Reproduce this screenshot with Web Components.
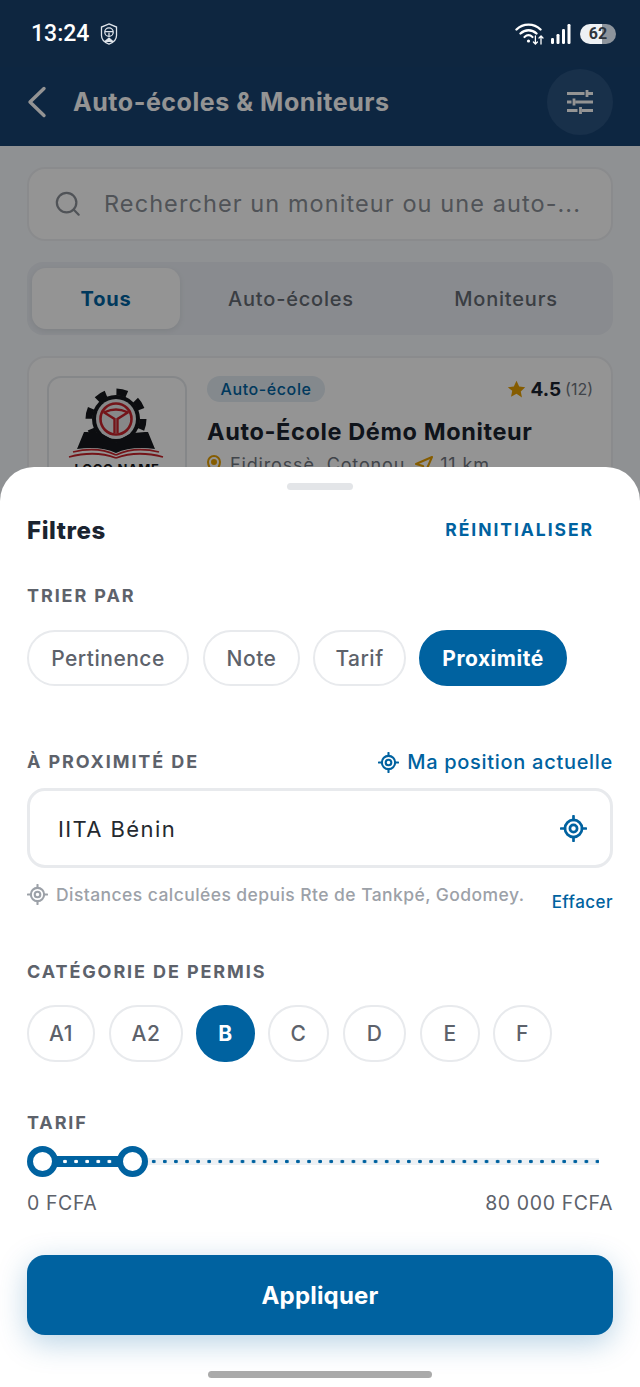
<!DOCTYPE html>
<html lang="fr">
<head>
<meta charset="utf-8">
<title>Filtres</title>
<style>
    html, body { margin: 0; padding: 0; background: #fff; }
    body { font-family: Inter, "Noto Sans", sans-serif; }
</style>
</head>
<body>
<phone-screen>
    <status-bar></status-bar>
    <top-bar title="Auto-écoles &amp; Moniteurs"></top-bar>
    <search-box placeholder="Rechercher un moniteur ou une auto-..."></search-box>
    <seg-tabs></seg-tabs>
    <school-card></school-card>
    <filter-sheet slot="sheet">
        <sheet-head></sheet-head>

        <section-label style="margin-top:40px">TRIER PAR</section-label>
        <chip-row style="margin-top:23px; gap:13px">
            <filter-chip w="162" style="margin-right:1px">Pertinence</filter-chip>
            <filter-chip w="97">Note</filter-chip>
            <filter-chip w="93">Tarif</filter-chip>
            <filter-chip w="148" active>Proximité</filter-chip>
        </chip-row>

        <near-head style="margin-top:63px"></near-head>
        <place-input style="margin-top:15px" value="IITA Bénin"></place-input>
        <place-hint style="margin-top:16px"></place-hint>

        <section-label style="margin-top:45px">CATÉGORIE DE PERMIS</section-label>
        <chip-row style="margin-top:22px; gap:13px">
            <filter-chip w="68" h="57" style="margin-right:1px">A1</filter-chip>
            <filter-chip w="74" h="57">A2</filter-chip>
            <filter-chip w="59" h="57" active>B</filter-chip>
            <filter-chip w="61" h="57" style="margin-right:1px">C</filter-chip>
            <filter-chip w="63" h="57" style="margin-right:1px">D</filter-chip>
            <filter-chip w="60" h="57">E</filter-chip>
            <filter-chip w="59" h="57">F</filter-chip>
        </chip-row>

        <section-label style="margin-top:50px">TARIF</section-label>
        <price-slider style="margin-top:12px" from="0 FCFA" to="80 000 FCFA"></price-slider>

        <primary-button style="margin-top:40px">Appliquer</primary-button>
        <home-bar></home-bar>
    </filter-sheet>
</phone-screen>

<script>
const BLUE = '#0062a0'

// same crosshair is used three times in the sheet, only size and colour change
function targetIcon(size, color) {
    return `<svg width="${size}" height="${size}" viewBox="0 0 24 24" fill="none" stroke="${color}" stroke-width="2.4" stroke-linecap="round" style="display:block;flex:none">
        <circle cx="12" cy="12" r="7.6"/>
        <circle cx="12" cy="12" r="3.2"/>
        <path d="M12 1v3.4M12 19.6V23M1 12h3.4M19.6 12H23"/>
    </svg>`
}

class PhoneScreen extends HTMLElement {
    constructor() {
        super()
        this.attachShadow({ mode: 'open' }).innerHTML = `
            <style>
                :host{
                    display:flex;
                    flex-direction:column;
                    position:relative;
                    width:640px;
                    height:1387px;
                    overflow:hidden;
                    background:#f7fafd;
                }
                .scrim{
                    position:absolute;
                    inset:0;
                    background:rgba(0,0,0,.42);
                    z-index:1;
                }
            </style>
            <slot></slot>
            <div class="scrim"></div>
            <slot name="sheet"></slot>
        `
    }
}

class StatusBar extends HTMLElement {
    constructor() {
        super()
        this.attachShadow({ mode: 'open' }).innerHTML = `
            <style>
                :host{
                    display:flex;
                    align-items:center;
                    position:relative;
                    z-index:2;
                    height:67px;
                    box-sizing:border-box;
                    padding:0 24px 0 31px;
                    background:#0e2640;
                    color:#fff;
                    font-family:Roboto,sans-serif;
                }
                .time{
                    font-size:23px;
                    font-weight:500;
                }
                .shield{
                    margin-left:10px;
                }
                .right{
                    margin-left:auto;
                    display:flex;
                    align-items:center;
                }
                .batt{
                    position:relative;
                    width:36px;
                    height:20px;
                    margin-left:9px;
                    border-radius:10px;
                    background:linear-gradient(90deg,#eef1f4 0 62%,#8d949c 62%);
                    color:#2f353c;
                    font-size:16px;
                    font-weight:700;
                    line-height:20px;
                    text-align:center;
                }
            </style>
            <span class="time">13:24</span>
            <svg class="shield" width="20" height="22" viewBox="0 0 20 24" fill="none" stroke="#dfe4ea" stroke-width="1.4">
                <path d="M10 1l8.200 3.400v9.200c0 4.500-3.600 7.800-8.200 9.400-4.600-1.600-8.200-4.900-8.200-9.400V4.400z"/>
                <circle cx="10" cy="10" r="4.600"/>
                <path d="M5.600 9.400h8.800M10 10.500v4"/>
                <path d="M6 20l4-3.600 4 3.600z" fill="#dfe4ea"/>
            </svg>
            <span class="right">
                <svg width="30" height="24" viewBox="0 0 30 24" fill="none" stroke="#fff" stroke-linecap="round">
                    <path d="M1.500 7.500C8 1 19 1 25.500 7.500" stroke-width="2.400"/>
                    <path d="M5.500 11.500c4.600-4.400 11.400-4.400 16 0" stroke-width="2.400"/>
                    <path d="M9.500 15c2.400-2.200 5.600-2.200 8 0" stroke-width="2.200"/>
                    <circle cx="13.500" cy="19" r="1.600" fill="#fff" stroke="none"/>
                    <path d="M20.400 14v8M18.400 20l2 2 2-2M26 22v-8M24 16l2-2 2 2" stroke-width="1.300"/>
                </svg>
                <svg width="20" height="22" viewBox="0 0 20 22" fill="#fff" style="margin-left:6px">
                    <rect x="0" y="15" width="3" height="6" rx="1.200"/>
                    <rect x="5.500" y="11" width="3" height="10" rx="1.200"/>
                    <rect x="11" y="6" width="3" height="15" rx="1.200"/>
                    <rect x="16.500" y="1" width="3" height="20" rx="1.200"/>
                </svg>
                <span class="batt">62</span>
            </span>
        `
    }
}

class TopBar extends HTMLElement {
    constructor() {
        super()
        this.attachShadow({ mode: 'open' }).innerHTML = `
            <style>
                :host{
                    display:flex;
                    align-items:center;
                    height:79px;
                    box-sizing:border-box;
                    padding:0 27px 10px 27px;
                    background:#184270;
                    color:#fff;
                }
                .title{
                    margin-left:26px;
                    font-size:25px;
                    font-weight:700;
                    letter-spacing:.55px;
                }
                .btn{
                    margin-left:auto;
                    width:66px;
                    height:66px;
                    border-radius:50%;
                    background:#2a5380;
                    display:flex;
                    align-items:center;
                    justify-content:center;
                }
            </style>
            <svg width="20" height="32" viewBox="0 0 20 32" fill="none" stroke="#fff" stroke-width="3.4" stroke-linecap="round" stroke-linejoin="round">
                <path d="M17 2.500L3 16l14 13.500"/>
            </svg>
            <span class="title"></span>
            <span class="btn">
                <svg width="26" height="24" viewBox="0 0 26 24" fill="none" stroke="#fff" stroke-width="2.8">
                    <path d="M0 3.500H17.500M21 3.500H26M20 0V7"/>
                    <path d="M0 12H4.500M8.500 12H26M7 8.500V15.500"/>
                    <path d="M0 20.500H10.500M15 20.500H26M13.500 17V24"/>
                </svg>
            </span>
        `
        this.shadowRoot.querySelector('.title').textContent = this.getAttribute('title')
    }
}

class SearchBox extends HTMLElement {
    constructor() {
        super()
        this.attachShadow({ mode: 'open' }).innerHTML = `
            <style>
                :host{
                    display:flex;
                    align-items:center;
                    height:74px;
                    box-sizing:border-box;
                    margin:21px 27px 0;
                    padding:0 25px;
                    background:#fff;
                    border:2px solid #eef0f3;
                    border-radius:18px;
                    color:#8a8f97;
                }
                span{
                    margin-left:23px;
                    padding-bottom:2px;
                    font-size:23.5px;
                    letter-spacing:1.08px;
                    white-space:nowrap;
                }
            </style>
            <svg width="26" height="26" viewBox="0 0 28 28" fill="none" stroke="#8a8f97" stroke-width="2.4" stroke-linecap="round" style="margin-left:1px">
                <circle cx="12.500" cy="12.500" r="10.500"/>
                <path d="M20 20l5.500 5.500"/>
            </svg>
            <span></span>
        `
        this.shadowRoot.querySelector('span').textContent = this.getAttribute('placeholder')
    }
}

class SegTabs extends HTMLElement {
    constructor() {
        super()
        this.attachShadow({ mode: 'open' }).innerHTML = `
            <style>
                :host{
                    display:grid;
                    grid-template-columns:148px 222px 208px;
                    height:73px;
                    box-sizing:border-box;
                    margin:21px 27px 0;
                    padding:6px 5px;
                    background:#ecf0f6;
                    border-radius:16px;
                    color:#656b74;
                    font-size:20px;
                    font-weight:500;
                    letter-spacing:.8px;
                }
                div{
                    display:flex;
                    align-items:center;
                    justify-content:center;
                }
                .on{
                    background:#fff;
                    border-radius:14px;
                    color:${BLUE};
                    font-weight:700;
                    box-shadow:0 2px 6px rgba(0,0,0,.08);
                }
            </style>
            <div class="on">Tous</div>
            <div>Auto-écoles</div>
            <div>Moniteurs</div>
        `
    }
}

class SchoolCard extends HTMLElement {
    constructor() {
        super()
        this.attachShadow({ mode: 'open' }).innerHTML = `
            <style>
                :host{
                    display:grid;
                    grid-template-columns:140px 1fr;
                    column-gap:20px;
                    height:230px;
                    box-sizing:border-box;
                    margin:21px 27px 0;
                    padding:18px;
                    background:#fff;
                    border:2px solid #eef0f3;
                    border-radius:18px;
                }
                .logo{
                    height:150px;
                    border:2px solid #e6e9ed;
                    border-radius:14px;
                    box-sizing:border-box;
                    display:flex;
                    flex-direction:column;
                    align-items:center;
                    padding-top:9px;
                    overflow:hidden;
                }
                .logo b{
                    margin-top:4px;
                    font-size:13px;
                    line-height:13px;
                    letter-spacing:.6px;
                    color:#16181c;
                    white-space:nowrap;
                }
                .top{
                    display:flex;
                    align-items:center;
                    justify-content:space-between;
                }
                .badge{
                    height:26px;
                    width:118px;
                    border-radius:13px;
                    background:#e3ecf3;
                    color:${BLUE};
                    font-size:16px;
                    font-weight:500;
                    letter-spacing:.6px;
                    line-height:26px;
                    text-align:center;
                }
                .rate{
                    display:flex;
                    align-items:center;
                    gap:4px;
                    font-size:19px;
                    font-weight:700;
                    color:#1b2430;
                }
                .rate small{
                    font-size:16px;
                    font-weight:400;
                    color:#6f7680;
                }
                h3{
                    margin:15px 0 0;
                    font-size:23.5px;
                    line-height:30px;
                    font-weight:700;
                    letter-spacing:.62px;
                    color:#1b2430;
                    white-space:nowrap;
                }
                .where{
                    display:flex;
                    align-items:center;
                    margin-top:7px;
                    font-size:18px;
                    letter-spacing:.85px;
                    color:#6f7680;
                    white-space:nowrap;
                }
            </style>
            <div class="logo">
                <svg width="112" height="72" viewBox="0 0 112 72" style="flex:none">
                    <circle cx="55" cy="32" r="24" fill="#16181c"/>
                    <circle cx="55" cy="32" r="27" fill="none" stroke="#16181c" stroke-width="7" stroke-dasharray="10.600 10.600"/>
                    <circle cx="55" cy="32" r="20" fill="#e8eaec"/>
                    <circle cx="55" cy="32" r="15.500" fill="none" stroke="#c8242b" stroke-width="2.600"/>
                    <path d="M42.500 25l11 7v14M67.500 25l-11 7v14M44 25q11-5 22 0" fill="none" stroke="#c8242b" stroke-width="2.400"/>
                    <path fill="#16181c" d="M23 45q20-1 32 11 12-12 32-11l7 17q-24-3-39 4-15-7-39-4z"/>
                    <path d="M12 65q24-6 43 3M98 65q-24-6-43 3M8 70q26-7 47 1M102 70q-26-7-47 1" fill="none" stroke="#c8242b" stroke-width="1.800"/>
                </svg>
                <b>LOGO NAME</b>
            </div>
            <div>
                <div class="top">
                    <span class="badge">Auto-école</span>
                    <span class="rate">
                        <svg width="19" height="19" viewBox="0 0 24 24" fill="#e69f00"><path d="M12 1l3.400 7.200 7.600 1-5.600 5.300 1.500 7.700L12 17.400l-6.900 3.800 1.500-7.700L1 9.200l7.600-1z"/></svg>
                        4.5 <small>(12)</small>
                    </span>
                </div>
                <h3>Auto-École Démo Moniteur</h3>
                <div class="where">
                    <svg width="14" height="20" viewBox="0 0 14 20" fill="none" stroke="#e69f00" stroke-width="2"><path d="M7 19C3 14 1 10.500 1 7a6 6 0 0112 0c0 3.500-2 7-6 12z"/><circle cx="7" cy="7" r="2" fill="#e69f00"/></svg>
                    <span style="margin-left:9px">Fidirossè, Cotonou</span>
                    <svg width="18" height="18" viewBox="0 0 18 18" fill="none" stroke="#e69f00" stroke-width="2" stroke-linejoin="round" style="margin-left:10px"><path d="M17 1L1 8l7 2 2 7z"/></svg>
                    <span style="margin-left:7px">11 km</span>
                </div>
            </div>
        `
    }
}

class FilterSheet extends HTMLElement {
    constructor() {
        super()
        this.attachShadow({ mode: 'open' }).innerHTML = `
            <style>
                :host{
                    display:block;
                    position:absolute;
                    left:0;
                    right:0;
                    bottom:0;
                    height:920px;
                    z-index:2;
                    box-sizing:border-box;
                    padding:0 27px;
                    background:#fff;
                    border-radius:34px 34px 0 0;
                }
                .grip{
                    width:66px;
                    height:7px;
                    margin:0 auto;
                    position:relative;
                    top:16px;
                    background:#e3e5e8;
                    border-radius:4px;
                }
            </style>
            <div class="grip"></div>
            <slot></slot>
        `
    }
}

class SheetHead extends HTMLElement {
    constructor() {
        super()
        this.attachShadow({ mode: 'open' }).innerHTML = `
            <style>
                :host{
                    display:flex;
                    align-items:center;
                    justify-content:space-between;
                    height:30px;
                    padding-top:41px;
                    padding-right:19px;
                }
                .t{
                    font-size:24px;
                    font-weight:800;
                    letter-spacing:.6px;
                    color:#1b2430;
                }
                .r{
                    padding-bottom:2px;
                    font-size:17.5px;
                    font-weight:700;
                    letter-spacing:1.95px;
                    color:${BLUE};
                }
            </style>
            <span class="t">Filtres</span>
            <span class="r">RÉINITIALISER</span>
        `
    }
}

class SectionLabel extends HTMLElement {
    constructor() {
        super()
        this.attachShadow({ mode: 'open' }).innerHTML = `
            <style>
                :host{
                    display:block;
                    font-size:18px;
                    line-height:22px;
                    font-weight:700;
                    letter-spacing:1.9px;
                    color:#5d626b;
                }
            </style>
            <slot></slot>
        `
    }
}

class ChipRow extends HTMLElement {
    constructor() {
        super()
        this.attachShadow({ mode: 'open' }).innerHTML = `
            <style>
                :host{
                    display:flex;
                }
            </style>
            <slot></slot>
        `
    }
}

class FilterChip extends HTMLElement {
    constructor() {
        super()
        const active = this.hasAttribute('active')
        const w = this.getAttribute('w')
        const h = this.getAttribute('h') || 56
        this.attachShadow({ mode: 'open' }).innerHTML = `
            <style>
                :host{
                    display:flex;
                    align-items:center;
                    justify-content:center;
                    flex:none;
                    box-sizing:border-box;
                    width:${w}px;
                    height:${h}px;
                    border-radius:${h / 2}px;
                    border:2px solid ${active ? BLUE : '#e8eaed'};
                    background:${active ? BLUE : '#fff'};
                    color:${active ? '#fff' : '#5d626b'};
                    font-size:21px;
                    font-weight:${active ? 700 : 500};
                    letter-spacing:.5px;
                }
            </style>
            <slot></slot>
        `
    }
}

class NearHead extends HTMLElement {
    constructor() {
        super()
        this.attachShadow({ mode: 'open' }).innerHTML = `
            <style>
                :host{
                    display:flex;
                    align-items:center;
                    justify-content:space-between;
                    height:24px;
                }
                .l{
                    font-size:18px;
                    font-weight:700;
                    letter-spacing:1.9px;
                    color:#5d626b;
                }
                .r{
                    display:flex;
                    align-items:center;
                    gap:8px;
                    padding-top:2px;
                    color:${BLUE};
                    font-size:20px;
                    font-weight:500;
                    letter-spacing:.7px;
                }
            </style>
            <span class="l">À PROXIMITÉ DE</span>
            <span class="r">${targetIcon(21, BLUE)}Ma position actuelle</span>
        `
    }
}

class PlaceInput extends HTMLElement {
    constructor() {
        super()
        this.attachShadow({ mode: 'open' }).innerHTML = `
            <style>
                :host{
                    display:flex;
                    align-items:center;
                    justify-content:space-between;
                    height:80px;
                    box-sizing:border-box;
                    padding:0 23px 0 28px;
                    border:3px solid #e8eaed;
                    border-radius:18px;
                    font-size:22px;
                    letter-spacing:1.4px;
                    color:#24292f;
                }
                span{
                    padding-top:2px;
                }
            </style>
            <span></span>
            ${targetIcon(27, BLUE)}
        `
        this.shadowRoot.querySelector('span').textContent = this.getAttribute('value')
    }
}

class PlaceHint extends HTMLElement {
    constructor() {
        super()
        this.attachShadow({ mode: 'open' }).innerHTML = `
            <style>
                :host{
                    display:flex;
                    align-items:flex-start;
                    justify-content:space-between;
                    height:32px;
                }
                .m{
                    display:flex;
                    align-items:center;
                    gap:8px;
                    color:#9ca1a8;
                    font-size:17.5px;
                    font-weight:500;
                    letter-spacing:.43px;
                    white-space:nowrap;
                }
                .e{
                    margin-top:8px;
                    color:${BLUE};
                    font-size:17px;
                    font-weight:500;
                    letter-spacing:.45px;
                }
            </style>
            <span class="m">${targetIcon(21, '#9ca1a8')}Distances calculées depuis Rte de Tankpé, Godomey.</span>
            <span class="e">Effacer</span>
        `
    }
}

class PriceSlider extends HTMLElement {
    constructor() {
        super()
        this.attachShadow({ mode: 'open' }).innerHTML = `
            <style>
                :host{
                    display:block;
                    font-size:19.5px;
                    letter-spacing:.6px;
                    color:#5d626b;
                }
                .track{
                    position:relative;
                    height:31px;
                }
                .line{
                    position:absolute;
                    left:16px;
                    right:14px;
                    top:12px;
                    height:7px;
                    background:#eef1f4;
                }
                .dots{
                    background:radial-gradient(circle,${BLUE} 1.6px,transparent 2.1px) 5.35px 0/11.1px 7px repeat-x #eef1f4;
                }
                .fill{
                    position:absolute;
                    left:16px;
                    width:90px;
                    top:10px;
                    height:11px;
                    background:radial-gradient(circle,#fff 1.6px,transparent 2.1px) 5.35px 0/11.1px 11px repeat-x ${BLUE};
                }
                .thumb{
                    position:absolute;
                    top:0;
                    width:31px;
                    height:31px;
                    box-sizing:border-box;
                    border:6px solid ${BLUE};
                    border-radius:50%;
                    background:#fff;
                }
                .labels{
                    display:flex;
                    justify-content:space-between;
                    margin-top:14px;
                    line-height:24px;
                }
            </style>
            <div class="track">
                <div class="line dots"></div>
                <div class="fill"></div>
                <div class="thumb" style="left:0"></div>
                <div class="thumb" style="left:90px"></div>
            </div>
            <div class="labels"><span>${this.getAttribute('from')}</span><span>${this.getAttribute('to')}</span></div>
        `
    }
}

class PrimaryButton extends HTMLElement {
    constructor() {
        super()
        this.attachShadow({ mode: 'open' }).innerHTML = `
            <style>
                :host{
                    display:flex;
                    align-items:center;
                    justify-content:center;
                    height:80px;
                    border-radius:18px;
                    background:${BLUE};
                    color:#fff;
                    font-size:24px;
                    font-weight:700;
                    letter-spacing:.2px;
                    box-shadow:0 8px 30px rgba(0,98,160,.28);
                }
            </style>
            <slot></slot>
        `
    }
}

class HomeBar extends HTMLElement {
    constructor() {
        super()
        this.attachShadow({ mode: 'open' }).innerHTML = `
            <style>
                :host{
                    display:block;
                    width:224px;
                    height:7px;
                    margin:36px auto 0;
                    border-radius:4px;
                    background:#aaaaaa;
                }
            </style>
        `
    }
}

customElements.define('phone-screen', PhoneScreen)
customElements.define('status-bar', StatusBar)
customElements.define('top-bar', TopBar)
customElements.define('search-box', SearchBox)
customElements.define('seg-tabs', SegTabs)
customElements.define('school-card', SchoolCard)
customElements.define('filter-sheet', FilterSheet)
customElements.define('sheet-head', SheetHead)
customElements.define('section-label', SectionLabel)
customElements.define('chip-row', ChipRow)
customElements.define('filter-chip', FilterChip)
customElements.define('near-head', NearHead)
customElements.define('place-input', PlaceInput)
customElements.define('place-hint', PlaceHint)
customElements.define('price-slider', PriceSlider)
customElements.define('primary-button', PrimaryButton)
customElements.define('home-bar', HomeBar)
</script>
</body>
</html>
